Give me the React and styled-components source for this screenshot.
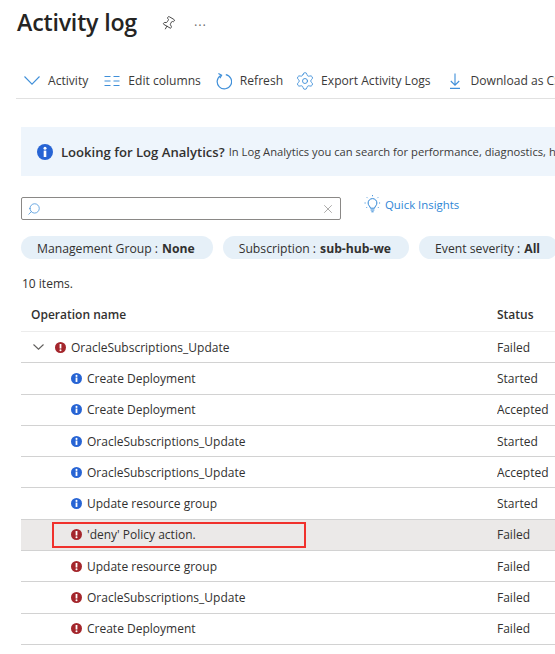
import React from 'react';
import styled, { createGlobalStyle } from 'styled-components';
import { Pin, Search, X, Settings } from 'lucide-react';

const GlobalStyle = createGlobalStyle`
	html, body {
		margin: 0;
		padding: 0;
		background: #fff;
		overflow: hidden;
	}
	body {
		font-family: "Open Sans", "Noto Sans", "Liberation Sans", sans-serif;
		color: #323130;
	}
`;

const Page = styled.div`
	width: 555px;
	height: 654px;
	overflow: hidden;
	display: flex;
	flex-direction: column;
`;

const TitleRow = styled.div`
	height: 46px;
	display: flex;
	align-items: center;
	padding-left: 17px;
	flex-shrink: 0;
`;

const Title = styled.h1`
	margin: -2px 0 0 0;
	font-size: 23.2px;
	font-weight: 600;
	letter-spacing: -0.2px;
	color: #252423;
	white-space: nowrap;
`;

const PinIcon = styled(Pin)`
	margin-left: 24px;
	color: #444;
	transform: rotate(30deg);
`;

const More = styled.span`
	margin-left: 18px;
	font-size: 13px;
	line-height: 13px;
	letter-spacing: 0.8px;
	color: #707070;
	position: relative;
	top: -2px;
`;

const Toolbar = styled.div`
	margin: 17px 0 0 16px;
	height: 36px;
	box-sizing: border-box;
	border-bottom: 1px solid #e1e1e1;
	display: flex;
	align-items: center;
	padding-left: 8px;
	overflow: hidden;
	flex-shrink: 0;
`;

const ToolButton = styled.div`
	display: flex;
	align-items: center;
	gap: ${props => props.iconGap || 8}px;
	margin-right: ${props => props.gap}px;
	font-size: 12.1px;
	color: #3b3a39;
	white-space: nowrap;
	flex-shrink: 0;
	svg {
		color: #3f8fd9;
		flex-shrink: 0;
	}
`;

const Banner = styled.div`
	margin: 28px 0 0 21px;
	height: 49px;
	background: #eef5fc;
	display: flex;
	align-items: center;
	padding-left: 16px;
	white-space: nowrap;
	overflow: hidden;
	flex-shrink: 0;
`;

const BannerTitle = styled.strong`
	font-size: 13.1px;
	font-weight: 600;
	margin-left: 8px;
	color: #323130;
`;

const BannerText = styled.span`
	font-size: 11.2px;
	margin-left: 4px;
	color: #3b3a39;
`;

const SearchRow = styled.div`
	margin: 21px 0 0 21px;
	display: flex;
	align-items: flex-start;
	flex-shrink: 0;
`;

const SearchBox = styled.div`
	width: 320px;
	height: 23px;
	box-sizing: border-box;
	border: 1px solid #8a8886;
	border-radius: 2px;
	display: flex;
	align-items: center;
	justify-content: space-between;
	padding: 0 5px;
`;

const SearchIcon = styled(Search)`
	color: #3f8fd9;
	transform: scaleX(-1);
`;

const ClearIcon = styled(X)`
	color: #8a8886;
`;

const InsightsLink = styled.div`
	margin: -2px 0 0 23px;
	display: flex;
	align-items: center;
	gap: 4px;
	font-size: 11.4px;
	color: #2f86d6;
	white-space: nowrap;
	svg {
		color: #2f86d6;
		flex-shrink: 0;
	}
`;

const Chips = styled.div`
	margin: 16px 0 0 21px;
	display: flex;
	gap: 10px;
	white-space: nowrap;
	flex-shrink: 0;
`;

const Chip = styled.div`
	height: 23px;
	box-sizing: border-box;
	border-radius: 12px;
	background: #e6f0f8;
	display: flex;
	align-items: center;
	padding: 1px 18px 0 16px;
	font-size: 12.2px;
	color: #323130;
	flex-shrink: 0;
	b {
		font-weight: 700;
		margin-left: 4px;
	}
`;

const Count = styled.div`
	margin: 17px 0 0 22px;
	font-size: 12px;
	line-height: 16px;
	color: #323130;
	flex-shrink: 0;
`;

const Table = styled.div`
	margin: 9px 0 0 21px;
	width: 534px;
	display: flex;
	flex-direction: column;
	flex-shrink: 0;
`;

const Row = styled.div`
	height: ${props => props.header ? 31 : 31.3}px;
	box-sizing: border-box;
	padding-bottom: ${props => props.header ? 4 : 0}px;
	display: grid;
	grid-template-columns: 476px 1fr;
	align-items: center;
	border-bottom: 1px solid ${props => props.header ? '#ececec' : '#d2d2d2'};
	background: ${props => props.active ? '#ebe9e8' : 'transparent'};
	font-size: 12px;
	font-weight: ${props => props.header ? 600 : 400};
	color: #323130;
	white-space: nowrap;
`;

const NameCell = styled.div`
	display: flex;
	align-items: center;
	gap: 5px;
	height: 26px;
	box-sizing: border-box;
	margin-left: ${props => props.marked ? 31 : 0}px;
	padding-left: ${props => props.indent}px;
	width: ${props => props.marked ? '254px' : 'auto'};
	border: ${props => props.marked ? '2px solid #f0312c' : 'none'};
`;

const ExpanderSlot = styled.span`
	display: flex;
	color: #605e5c;
	margin-right: 6px;
`;

const StatusCell = styled.div`
	overflow: hidden;
`;

const Chevron = ({ width, height }) => (
	<svg width={width} height={height} viewBox={`0 0 ${width} ${height}`} fill="none" stroke="currentColor" strokeWidth="1.1">
		<path d={`M0.5 0.5L${width / 2} ${height - 0.8}L${width - 0.5} 0.5`} />
	</svg>
);

const InfoIcon = ({ size = 11 }) => (
	<svg width={size} height={size} viewBox="0 0 16 16" style={{ flexShrink: 0 }}>
		<circle cx="8" cy="8" r="8" fill="#2764d4" />
		<circle cx="8" cy="4.2" r="1.5" fill="#fff" />
		<rect x="6.7" y="6.6" width="2.6" height="6.4" fill="#fff" />
	</svg>
);

const ErrorIcon = () => (
	<svg width="11" height="11" viewBox="0 0 16 16" style={{ flexShrink: 0 }}>
		<circle cx="8" cy="8" r="8" fill="#a4262c" />
		<rect x="6.7" y="3" width="2.6" height="6.6" rx="0.6" fill="#fff" />
		<circle cx="8" cy="11.9" r="1.5" fill="#fff" />
	</svg>
);

const ColumnsIcon = () => (
	<svg width="16" height="12" viewBox="0 0 16 12" fill="none" stroke="currentColor" strokeWidth="1">
		<path d="M0.5 1.5h6M0.5 6h6M0.5 10.5h6M9.5 1.5h6M9.5 6h6M9.5 10.5h6" />
	</svg>
);

const RefreshIcon = () => (
	<svg width="16" height="18" viewBox="0 0 16 18" fill="none" stroke="currentColor" strokeWidth="1.2">
		<path d="M4.8 3.4A7.2 7.2 0 1 0 9.8 2.6" />
		<path d="M2.4 1.4l3.2 1.8-1.7 3" />
	</svg>
);

const DownloadIcon = () => (
	<svg width="12" height="16" viewBox="0 0 12 16" fill="none" stroke="currentColor" strokeWidth="1.1">
		<path d="M6 0.5V12M1.8 8L6 12.2L10.2 8M1 15.4h10" />
	</svg>
);

const BulbIcon = () => (
	<svg width="17" height="18" viewBox="0 0 17 18" fill="none" stroke="currentColor" strokeWidth="1">
		<path d="M6.4 13.2c0-1.8-2.3-2.6-2.3-5.2a4.4 4.4 0 0 1 8.8 0c0 2.6-2.3 3.4-2.3 5.2zM6.6 15h3.8M7.4 16.8h2.2" />
		<path d="M8.5 0.2v1.3M2.9 2.4l.9.9M14.1 2.4l-.9.9M0.6 8h1.3M15.1 8h1.3M2.2 13l.9-.9M14.8 13l-.9-.9" strokeDasharray="1 0.6" />
	</svg>
);

const rows = [
	{ name: 'OracleSubscriptions_Update', status: 'Failed', error: true, parent: true },
	{ name: 'Create Deployment', status: 'Started' },
	{ name: 'Create Deployment', status: 'Accepted' },
	{ name: 'OracleSubscriptions_Update', status: 'Started' },
	{ name: 'OracleSubscriptions_Update', status: 'Accepted' },
	{ name: 'Update resource group', status: 'Started' },
	{ name: "'deny' Policy action.", status: 'Failed', error: true, marked: true },
	{ name: 'Update resource group', status: 'Failed', error: true },
	{ name: 'OracleSubscriptions_Update', status: 'Failed', error: true },
	{ name: 'Create Deployment', status: 'Failed', error: true },
];

const rowIndent = row => {
	if (row.parent) return 12;
	if (row.marked) return 17;
	return 50;
};

const App = () => (
	<Page>
		<GlobalStyle />
		<TitleRow>
			<Title>Activity log</Title>
			<PinIcon size={15} strokeWidth={1.4} />
			<More>...</More>
		</TitleRow>
		<Toolbar>
			<ToolButton gap={16}><Chevron width={16} height={9} />Activity</ToolButton>
			<ToolButton gap={15}><ColumnsIcon />Edit columns</ToolButton>
			<ToolButton gap={12}><RefreshIcon />Refresh</ToolButton>
			<ToolButton gap={18} iconGap={6}><Settings size={20} strokeWidth={1.1} />Export Activity Logs</ToolButton>
			<ToolButton gap={0} iconGap={10}><DownloadIcon />Download as CSV</ToolButton>
		</Toolbar>
		<Banner>
			<InfoIcon size={16} />
			<BannerTitle>Looking for Log Analytics?</BannerTitle>
			<BannerText>In Log Analytics you can search for performance, diagnostics, health</BannerText>
		</Banner>
		<SearchRow>
			<SearchBox>
				<SearchIcon size={14} strokeWidth={1.3} />
				<ClearIcon size={14} strokeWidth={1.2} />
			</SearchBox>
			<InsightsLink><BulbIcon />Quick Insights</InsightsLink>
		</SearchRow>
		<Chips>
			<Chip>Management Group : <b>None</b></Chip>
			<Chip>Subscription : <b>sub-hub-we</b></Chip>
			<Chip>Event severity : <b>All</b></Chip>
		</Chips>
		<Count>10 items.</Count>
		<Table>
			<Row header>
				<NameCell indent={10}>Operation name</NameCell>
				<StatusCell>Status</StatusCell>
			</Row>
			{rows.map((row, i) => (
				<Row key={i} active={row.marked}>
					<NameCell indent={rowIndent(row)} marked={row.marked}>
						{row.parent && <ExpanderSlot><Chevron width={11} height={6} /></ExpanderSlot>}
						{row.error ? <ErrorIcon /> : <InfoIcon />}
						{row.name}
					</NameCell>
					<StatusCell>{row.status}</StatusCell>
				</Row>
			))}
		</Table>
	</Page>
);

export default App;
